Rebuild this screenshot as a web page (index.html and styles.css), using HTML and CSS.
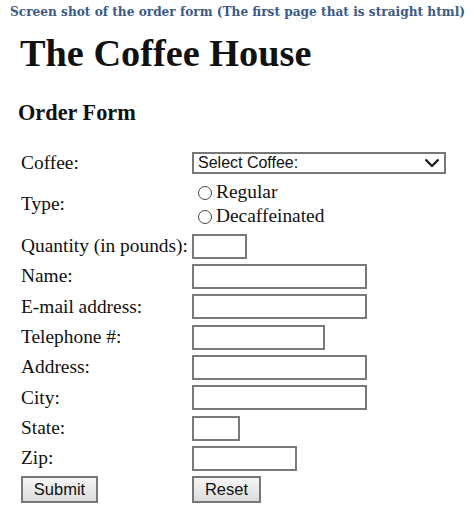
FILE: index.html
```html
<!DOCTYPE html>
<html>
<head>
<meta charset="utf-8">
<link rel="stylesheet" href="styles.css">
</head>
<body>
<p class="caption">Screen shot of the order form (The first page that is straight html)</p>
<h1 class="title">The Coffee House</h1>
<h2 class="sub">Order Form</h2>
<form class="form">
  <label class="lbl">Coffee:</label>
  <div class="ctl"><div class="select"><span>Select Coffee:</span><svg class="chev" width="16" height="10" viewBox="0 0 16 10"><path d="M1.5 1.5 L8 8 L14.5 1.5" fill="none" stroke="#111" stroke-width="2.2"/></svg></div></div>
  <label class="lbl type-lbl">Type:</label>
  <div class="ctl radios">
    <div class="radio-row"><span class="radio"></span>Regular</div>
    <div class="radio-row"><span class="radio"></span>Decaffeinated</div>
  </div>
  <label class="lbl">Quantity (in pounds):</label>
  <div class="ctl"><span class="box w-qty"></span></div>
  <label class="lbl">Name:</label>
  <div class="ctl"><span class="box w-long"></span></div>
  <label class="lbl">E-mail address:</label>
  <div class="ctl"><span class="box w-long"></span></div>
  <label class="lbl">Telephone #:</label>
  <div class="ctl"><span class="box w-tel"></span></div>
  <label class="lbl">Address:</label>
  <div class="ctl"><span class="box w-long"></span></div>
  <label class="lbl">City:</label>
  <div class="ctl"><span class="box w-long"></span></div>
  <label class="lbl">State:</label>
  <div class="ctl"><span class="box w-state"></span></div>
  <label class="lbl">Zip:</label>
  <div class="ctl"><span class="box w-zip"></span></div>
  <div class="ctl"><span class="btn w-submit">Submit</span></div>
  <div class="ctl"><span class="btn w-reset">Reset</span></div>
</form>
</body>
</html>
```
FILE: styles.css
```css
html, body { margin: 0; padding: 0; background: #fff; }
body { font-family: "Liberation Serif", "Times New Roman", serif; color: #111; }
.caption {
  margin: 0;
  padding: 3px 0 0 10px;
  font-family: "DejaVu Serif", serif;
  font-stretch: condensed;
  font-weight: bold;
  font-size: 13.5px;
  color: #3d5a86;
  height: 19px;
  white-space: nowrap;
}
.title {
  margin: 0;
  padding: 11px 0 0 20px;
  font-size: 38.3px;
  line-height: 40px;
  height: 67px;
}
.sub {
  margin: 0;
  padding: 0 0 0 18px;
  font-size: 22.3px;
  line-height: 26px;
  height: 50px;
}
.form {
  display: grid;
  grid-template-columns: 171px auto;
  row-gap: 5.33px;
  padding-left: 21px;
  font-size: 19.4px;
}
.lbl { display: flex; align-items: center; height: 25px; white-space: nowrap; }
.ctl { display: flex; align-items: center; }
.select {
  box-sizing: border-box;
  width: 254px; height: 22px;
  border: 2px solid #777;
  display: flex; align-items: center; justify-content: space-between;
  padding: 0 4px 0 4px;
  font-family: "Liberation Sans", Arial, sans-serif;
  font-size: 16px;
}
.type-lbl { height: auto; }
.radios { flex-direction: column; align-items: flex-start; }
.radio-row { display: flex; align-items: center; height: 24px; padding-left: 6px; }
.radio {
  box-sizing: border-box;
  width: 14px; height: 14px;
  border: 1.3px solid #444;
  border-radius: 50%;
  margin-right: 4px;
  margin-top: 1px;
}
.box {
  display: block;
  box-sizing: border-box;
  height: 25px;
  border: 2px solid #7a7a7a;
  background: #fff;
}
.w-qty { width: 55px; }
.w-long { width: 175px; }
.w-tel { width: 133px; }
.w-state { width: 48px; }
.w-zip { width: 105px; }
.btn {
  box-sizing: border-box;
  height: 27px;
  border: 2px solid #777;
  background: linear-gradient(#f6f6f6, #dcdcdc);
  font-family: "Liberation Sans", Arial, sans-serif;
  font-size: 16.5px;
  display: flex; align-items: center; justify-content: center;
}
.w-submit { width: 77px; }
.w-reset { width: 69px; }
```
